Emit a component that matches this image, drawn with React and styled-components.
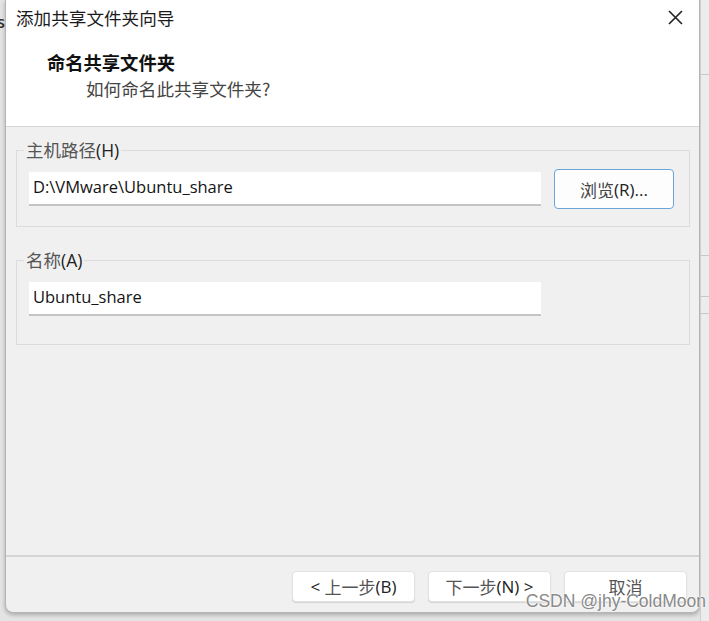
import React from 'react';
import styled, { createGlobalStyle } from 'styled-components';

const GlobalStyle = createGlobalStyle`
  html, body {
    margin: 0;
    padding: 0;
  }
  body {
    background: #e4e4e4;
    font-family: "Noto Sans CJK SC", sans-serif;
  }
`;

const Desktop = styled.div`
  position: relative;
  width: 709px;
  height: 621px;
  display: flex;
  overflow: hidden;
  background: #e4e4e4;
`;

const LeftEdge = styled.div`
  width: 5px;
  overflow: hidden;
  display: flex;
  justify-content: flex-end;
  padding-top: 12px;
  font: 600 17px "Open Sans", sans-serif;
  color: #333;
  line-height: 20px;
`;

const RightEdge = styled.div`
  flex: 1;
  display: flex;
  flex-direction: column;
  background: #ececec;
  border-left: 1px solid #cfcfcf;
`;

const EdgeLine = styled.div`
  margin-top: ${p => p.$gap}px;
  height: 1px;
  background: #c8c8c8;
`;

const Dialog = styled.div`
  width: 695px;
  height: 613px;
  box-sizing: border-box;
  display: flex;
  flex-direction: column;
  background: #f0f0f0;
  border: 1px solid #b4b4b4;
  border-top: none;
  border-radius: 0 0 8px 8px;
  box-shadow: 0 2px 4px rgba(0, 0, 0, 0.25);
  overflow: hidden;
`;

const Header = styled.div`
  height: 126px;
  background: #fff;
  border-bottom: 1px solid #d6d6d6;
  display: flex;
  flex-direction: column;
`;

const TitleBar = styled.div`
  height: 34px;
  display: flex;
  align-items: center;
  justify-content: space-between;
  padding: 0 15px 0 10px;
`;

const Title = styled.div`
  font-size: 17.6px;
  color: #1b1b1b;
`;

const Close = styled.svg`
  width: 17px;
  height: 17px;
`;

const Heading = styled.div`
  margin: 15px 0 0 41px;
  font-size: 18.3px;
  font-weight: 700;
  line-height: 26px;
  color: #111;
`;

const SubHeading = styled.div`
  margin: 1px 0 0 80px;
  font-size: 17.6px;
  line-height: 26px;
  color: #444;
`;

const Body = styled.div`
  flex: 1;
  display: flex;
  flex-direction: column;
  gap: 22px;
  padding: 12px 9px 0 10px;
`;

const Group = styled.fieldset`
  margin: 0;
  padding: ${p => p.$pad};
  border: 1px solid #dcdcdc;
  display: flex;
  align-items: center;
  gap: 13px;
`;

const Legend = styled.legend`
  margin-left: -5px;
  padding: 0 2px;
  font-size: 17.5px;
  line-height: 22px;
  color: #555;
`;

const Field = styled.div`
  width: 512px;
  height: 34px;
  box-sizing: border-box;
  background: #fff;
  border-bottom: 2px solid #c4c4c4;
  display: flex;
  align-items: center;
  padding: 0 0 4px 4px;
  font: 16.5px "Open Sans", sans-serif;
  color: #141414;
`;

const Browse = styled.div`
  width: 120px;
  height: 40px;
  box-sizing: border-box;
  border: 1.5px solid #6aa5dc;
  border-radius: 4px;
  background: #fdfdfd;
  display: flex;
  align-items: center;
  justify-content: center;
  font-size: 17px;
  color: #444;
`;

const Latin = styled.span`
  font-family: "Open Sans", sans-serif;
  color: #222;
`;

const Footer = styled.div`
  height: 57px;
  box-sizing: border-box;
  border-top: 2px solid #d4d4d4;
  display: flex;
  justify-content: flex-end;
  gap: 13px;
  padding: 14px 12px 0 0;
`;

const Button = styled.div`
  width: 123px;
  height: 31px;
  box-sizing: border-box;
  background: #fff;
  border: 1px solid #e2e2e2;
  border-radius: 4px;
  box-shadow: 0 1px 1px rgba(0, 0, 0, 0.12);
  display: flex;
  align-items: center;
  justify-content: center;
  white-space: pre;
  font-size: 17px;
  color: #555;
`;

const Watermark = styled.div`
  position: absolute;
  right: 3px;
  top: 590px;
  font: 17.5px "Liberation Sans", sans-serif;
  line-height: 22px;
  color: #8a8a8a;
  text-shadow: 0 0 2px #fff, 0 0 2px #fff;
`;

export default function App() {
  return (
    <Desktop>
      <GlobalStyle />
      <LeftEdge>s</LeftEdge>
      <Dialog>
        <Header>
          <TitleBar>
            <Title>添加共享文件夹向导</Title>
            <Close viewBox="0 0 17 17">
              <path d="M2 2 L15 15 M15 2 L2 15" stroke="#222" strokeWidth="1.6" fill="none" />
            </Close>
          </TitleBar>
          <Heading>命名共享文件夹</Heading>
          <SubHeading>如何命名此共享文件夹?</SubHeading>
        </Header>
        <Body>
          <Group $pad="8px 14px 17px 12px">
            <Legend>主机路径<Latin>(H)</Latin></Legend>
            <Field>D:\VMware\Ubuntu_share</Field>
            <Browse>浏览<Latin>(R)...</Latin></Browse>
          </Group>
          <Group $pad="11px 14px 28px 12px">
            <Legend>名称<Latin>(A)</Latin></Legend>
            <Field>Ubuntu_share</Field>
          </Group>
        </Body>
        <Footer>
          <Button><Latin>{'< '}</Latin>上一步<Latin>(B)</Latin></Button>
          <Button>下一步<Latin>{'(N) >'}</Latin></Button>
          <Button>取消</Button>
        </Footer>
      </Dialog>
      <RightEdge>
        <EdgeLine $gap={74} />
        <EdgeLine $gap={180} />
        <EdgeLine $gap={40} />
        <EdgeLine $gap={16} />
      </RightEdge>
      <Watermark>CSDN @jhy-ColdMoon</Watermark>
    </Desktop>
  );
}
